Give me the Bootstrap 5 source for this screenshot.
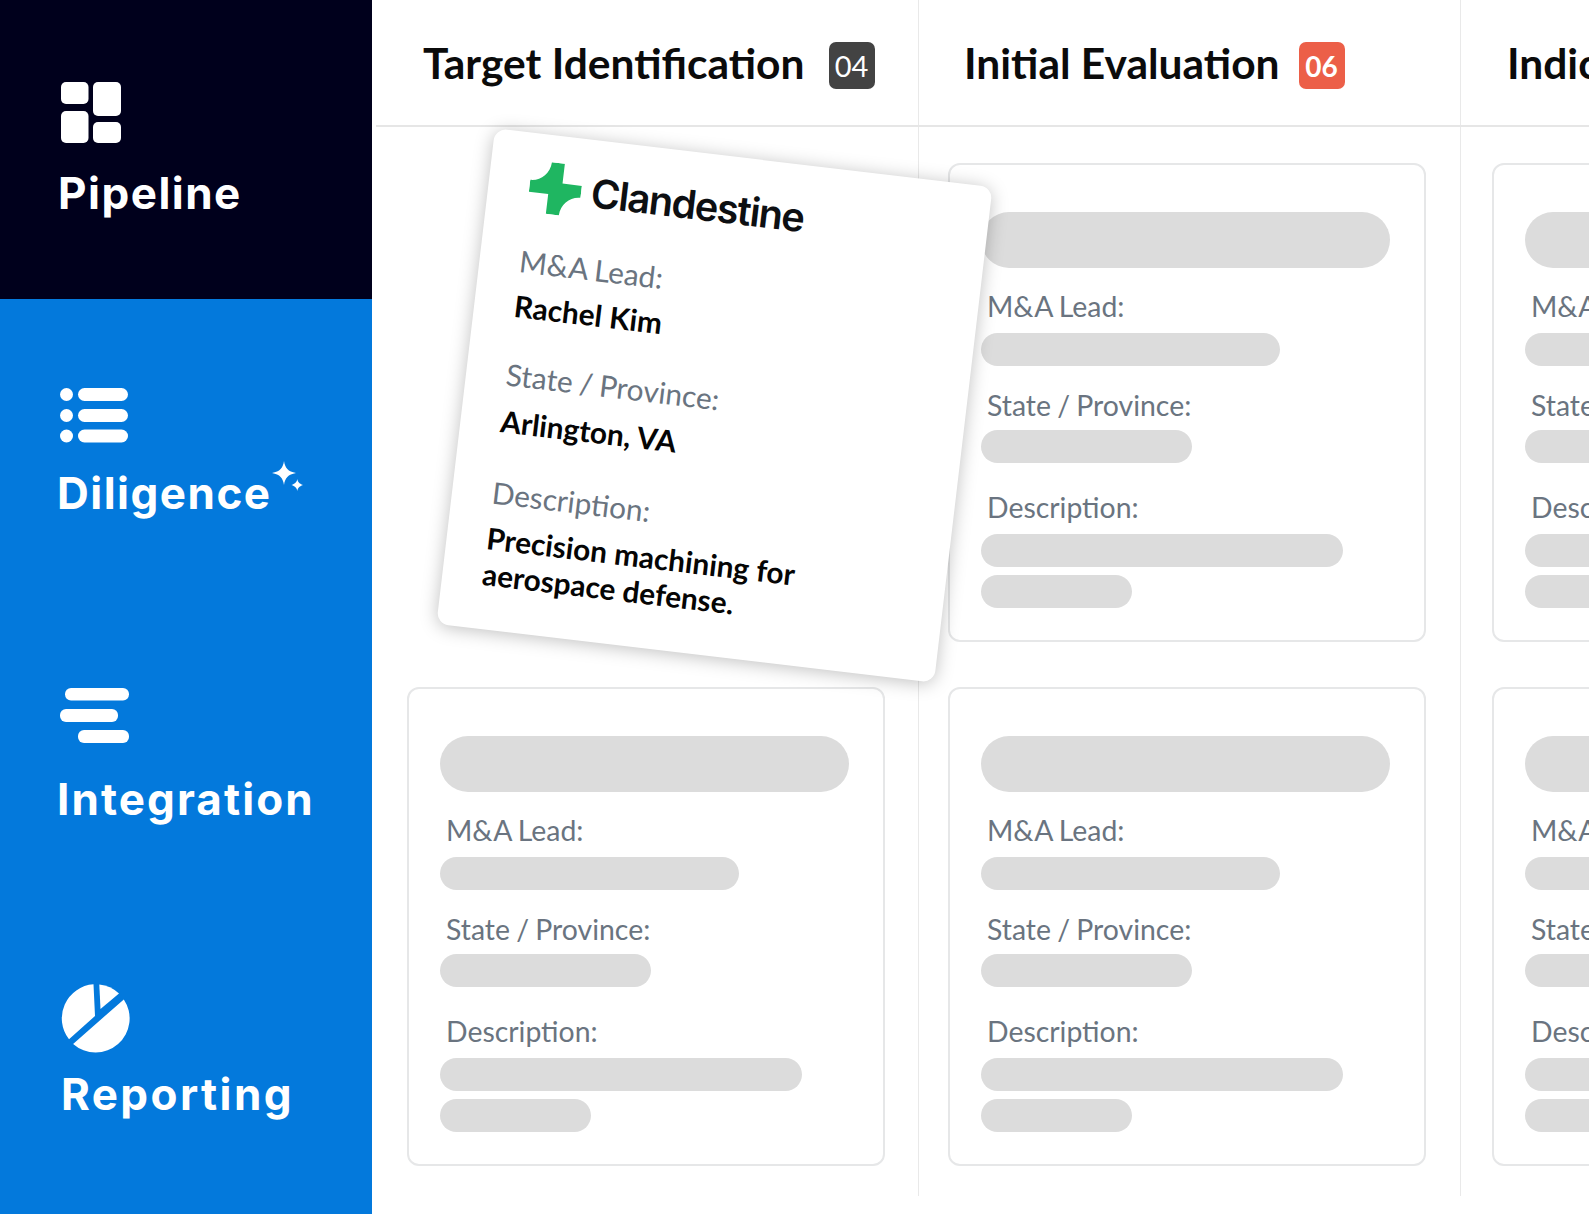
<!DOCTYPE html>
<html lang="en">
<head>
    <meta charset="UTF-8">
    <meta name="viewport" content="width=device-width, initial-scale=1.0">
    <title>Pipeline board</title>
    <link href="https://cdn.jsdelivr.net/npm/bootstrap@5.3.0/dist/css/bootstrap.min.css" rel="stylesheet">
    <style>
        body {
            background-color: #fff;
            font-family: "Lato", "Liberation Sans", sans-serif;
            overflow: hidden;
        }
        .app-shell {
            height: 1214px;
            overflow: hidden;
        }

        /* sidebar */
        .side {
            width: 372px;
            color: #fff;
            font-family: "Inter", "Liberation Sans", sans-serif;
        }
        .side-top {
            height: 299px;
            padding: 82px 0 0 61px;
            background-color: #00001c;
        }
        .side-rest {
            padding: 89px 0 0 60px;
            background-color: #0379dc;
        }
        .side-icon {
            display: block;
            fill: #fff;
        }
        .icon-pie { margin-left: 1px; }
        .side-label {
            display: block;
            width: max-content;
            position: relative;
            margin-left: -3px;
            font-size: 44px;
            font-weight: 650;
            line-height: 50px;
            letter-spacing: 1.5px;
        }
        .side-top .side-label { margin-top: 25px; }
        .lbl-diligence { margin-top: 25px; }
        .lbl-integration { margin-top: 31px; letter-spacing: 2.1px; }
        .lbl-reporting { margin-top: 15px; margin-left: 1px; letter-spacing: 2.4px; }
        .item-integration { margin-top: 170px; }
        .item-reporting { margin-top: 160px; }
        .sparkle {
            position: absolute;
            left: 212px;
            top: -7px;
            fill: #fff;
        }

        /* board */
        .board {
            margin-left: 4px;
            overflow: hidden;
        }
        .stage {
            flex: 0 0 542px;
            height: 1196px;
            border-right: 1px solid #e9e9e9;
        }
        .stage:nth-child(1) { flex-basis: 543px; }
        .stage-head {
            height: 127px;
            padding-left: 47px;
            gap: 24px;
            border-bottom: 2px solid #e6e6e6;
            margin-right: -1px;
        }
        .stage:nth-child(2) .stage-head { padding-left: 45px; }
        .stage:nth-child(3) .stage-head { padding-left: 46px; }
        .stage-title {
            margin: 0;
            font-size: 42.5px;
            font-weight: 700;
            color: #0b0b0b;
            white-space: nowrap;
        }
        .stage-count {
            width: 46px;
            height: 47px;
            margin-top: 6px;
            border-radius: 7px;
            font-size: 29px;
            color: #fff;
        }
        .count-dark { background-color: #434343; }
        .count-red {
            margin-left: -5px;
            background-color: #ec5f48;
            font-size: 28px;
            font-weight: 700;
        }
        .stage-body {
            padding: 36px 0 0 31px;
            gap: 45px;
        }
        .stage:nth-child(2) .stage-body { padding-left: 29px; }
        .deal-slot,
        .deal-card {
            width: 478px;
            height: 479px;
        }
        .deal-card {
            padding: 47px 31px 0;
            border: 2px solid #e6e7e8;
            border-radius: 12px;
        }
        .bar {
            height: 33px;
            border-radius: 17px;
            background-color: #dcdcdc;
        }
        .bar-title {
            width: 409px;
            height: 56px;
            border-radius: 28px;
            margin-bottom: 19px;
        }
        .bar-lead { width: 299px; }
        .bar-state { width: 211px; }
        .bar-desc { width: 362px; margin-bottom: 8px; }
        .bar-desc-end { width: 151px; }
        .field-label {
            font-size: 28.4px;
            word-spacing: -1px;
            line-height: 38px;
            margin: 0 0 6px 6px;
            color: #6a7480;
            white-space: nowrap;
        }
        .bar-title + .field-label { margin-bottom: 8px; }
        .bar-lead + .field-label { margin-top: 20px; }
        .bar-state + .field-label { margin-top: 25px; margin-bottom: 8px; }

        /* dragged card, lies over the board */
        .dragged {
            position: absolute;
            left: 464px;
            top: 156px;
            width: 501px;
            height: 499px;
            padding: 27px 40px 0;
            background-color: #fff;
            border-radius: 12px;
            transform: rotate(6.75deg);
            box-shadow: 0 2px 18px rgba(0, 0, 0, .25);
        }
        .logo-row {
            height: 52px;
            margin-bottom: 31px;
            margin-left: 1px;
            gap: 10px;
        }
        .logo-name {
            font-family: "Inter", "Liberation Sans", sans-serif;
            font-size: 39.8px;
            font-weight: 600;
            letter-spacing: -1.4px;
            color: #0d0f12;
            line-height: 52px;
        }
        .drag-label,
        .drag-value {
            font-size: 29.8px;
            line-height: 38px;
            margin: 0;
        }
        .drag-label {
            color: #6a7480;
            margin-bottom: 7px;
            word-spacing: -1px;
        }
        .drag-value {
            font-weight: 700;
            color: #050505;
            margin-bottom: 31px;
        }
        .drag-state { margin-bottom: 9px; }
        .drag-city { margin-bottom: 34px; }
        .drag-desc-label { margin-bottom: 9px; }
        .drag-desc { line-height: 36px; }
    </style>
</head>
<body>

<div class="app-shell d-flex position-relative">

    <!-- Sidebar -->
    <nav class="side flex-shrink-0 d-flex flex-column">
        <div class="side-top">
            <svg class="side-icon" width="60" height="61" viewBox="0 0 60 61">
                <rect x="0" y="0" width="27.5" height="22" rx="5"/>
                <rect x="0" y="29" width="27.5" height="32" rx="5"/>
                <rect x="32" y="0" width="28" height="34" rx="5"/>
                <rect x="32" y="40" width="28" height="21" rx="5"/>
            </svg>
            <span class="side-label">Pipeline</span>
        </div>
        <div class="side-rest flex-grow-1">
            <div>
                <svg class="side-icon" width="68" height="55" viewBox="0 0 68 55">
                    <rect x="0" y="0" width="13" height="13" rx="6.5"/>
                    <rect x="0" y="21" width="13" height="13" rx="6.5"/>
                    <rect x="0" y="41.5" width="13" height="13" rx="6.5"/>
                    <rect x="18" y="0" width="50" height="13" rx="6.5"/>
                    <rect x="18" y="21" width="50" height="13" rx="6.5"/>
                    <rect x="18" y="41.5" width="50" height="13" rx="6.5"/>
                </svg>
                <span class="side-label lbl-diligence">Diligence
                    <svg class="sparkle" width="40" height="36" viewBox="0 0 40 36">
                        <path d="M15 0C16 7 19 10.500 27 12C19 13.500 16 17 15 24C14 17 11 13.500 3 12C11 10.500 14 7 15 0Z"/>
                        <path d="M28.300 18C28.800 21 30 22.500 34 24C30 25.500 28.800 27 28.300 30C27.800 27 26.500 25.500 22.500 24C26.500 22.500 27.800 21 28.300 18Z"/>
                    </svg>
                </span>
            </div>
            <div class="item-integration">
                <svg class="side-icon" width="69" height="55" viewBox="0 0 69 55">
                    <rect x="5" y="0" width="64" height="12.500" rx="6"/>
                    <rect x="0" y="21" width="58" height="13" rx="6"/>
                    <rect x="18" y="42" width="51" height="13" rx="6"/>
                </svg>
                <span class="side-label lbl-integration">Integration</span>
            </div>
            <div class="item-reporting">
                <svg class="side-icon icon-pie" width="70" height="70" viewBox="0 0 70 70">
                    <path d="M32.500 .35L34 32L8 55.200A34 34 0 0 1 32.500 .35Z"/>
                    <path d="M38.300 .5L39.500 25L58 9.500A34 34 0 0 0 38.300 .5Z"/>
                    <path d="M62.800 15.400L12.100 59.900A34 34 0 0 0 62.800 15.400Z"/>
                </svg>
                <span class="side-label lbl-reporting">Reporting</span>
            </div>
        </div>
    </nav>

    <!-- Board -->
    <main class="board flex-grow-1 d-flex">
        <section class="stage flex-shrink-0">
            <header class="stage-head d-flex align-items-center">
                <h2 class="stage-title">Target Identification</h2>
                <span class="stage-count count-dark d-flex align-items-center justify-content-center">04</span>
            </header>
            <div class="stage-body d-flex flex-column" data-cards="1">
                <div class="deal-slot"></div>
            </div>
        </section>
        <section class="stage flex-shrink-0">
            <header class="stage-head d-flex align-items-center">
                <h2 class="stage-title">Initial Evaluation</h2>
                <span class="stage-count count-red d-flex align-items-center justify-content-center">06</span>
            </header>
            <div class="stage-body d-flex flex-column" data-cards="2"></div>
        </section>
        <section class="stage flex-shrink-0">
            <header class="stage-head d-flex align-items-center">
                <h2 class="stage-title">Indication of Interest</h2>
            </header>
            <div class="stage-body d-flex flex-column" data-cards="2"></div>
        </section>
    </main>

    <!-- Card being dragged -->
    <article class="dragged">
        <div class="logo-row d-flex align-items-center">
            <svg width="52" height="52" viewBox="0 0 52 52" fill="#1fb661">
                <path d="M19.500 0H32.500V20H52V32C42 32 33 40 32.500 52H19.500V32H0V20C10 20 19 12 19.500 0Z"/>
            </svg>
            <span class="logo-name">Clandestine</span>
        </div>
        <p class="drag-label">M&amp;A Lead:</p>
        <p class="drag-value">Rachel Kim</p>
        <p class="drag-label drag-state">State / Province:</p>
        <p class="drag-value drag-city">Arlington, VA</p>
        <p class="drag-label drag-desc-label">Description:</p>
        <p class="drag-value drag-desc">Precision machining for<br>aerospace defense.</p>
    </article>
</div>

<script src="https://cdn.jsdelivr.net/npm/bootstrap@5.3.0/dist/js/bootstrap.bundle.min.js"></script>
<script>
    // placeholder cards, all the same
    const cardHtml = `
        <div class="deal-card">
            <div class="bar bar-title"></div>
            <p class="field-label">M&amp;A Lead:</p>
            <div class="bar bar-lead"></div>
            <p class="field-label">State / Province:</p>
            <div class="bar bar-state"></div>
            <p class="field-label">Description:</p>
            <div class="bar bar-desc"></div>
            <div class="bar bar-desc-end"></div>
        </div>`;

    document.querySelectorAll('.stage-body').forEach(body => {
        const count = Number(body.dataset.cards);
        for (let i = 0; i < count; i++) {
            body.insertAdjacentHTML('beforeend', cardHtml);
        }
    });
</script>
</body>
</html>
